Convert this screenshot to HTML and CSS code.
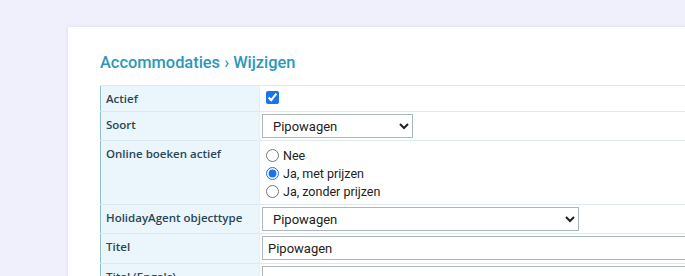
FILE: index.html
```
<!DOCTYPE html>
<html lang="nl">
<head>
<meta charset="utf-8">
<title>Accommodaties › Wijzigen</title>
<link rel="stylesheet" href="styles.css">
</head>
<body>
<div class="page">
  <div class="card">
    <h1 class="title">Accommodaties › Wijzigen</h1>
    <table class="form">
      <colgroup>
        <col class="col-lbl">
        <col class="col-val">
      </colgroup>
      <tr>
        <td class="lbl">Actief</td>
        <td class="val"><input type="checkbox" class="chk" checked></td>
      </tr>
      <tr>
        <td class="lbl">Soort</td>
        <td class="val">
          <select class="sel sel-sm"><option>Pipowagen</option></select>
        </td>
      </tr>
      <tr>
        <td class="lbl">Online boeken actief</td>
        <td class="val">
          <div class="radios">
            <label class="radio"><input type="radio" name="ob">Nee</label>
            <label class="radio"><input type="radio" name="ob" checked>Ja, met prijzen</label>
            <label class="radio"><input type="radio" name="ob">Ja, zonder prijzen</label>
          </div>
        </td>
      </tr>
      <tr>
        <td class="lbl">HolidayAgent objecttype</td>
        <td class="val">
          <select class="sel sel-lg"><option>Pipowagen</option></select>
        </td>
      </tr>
      <tr>
        <td class="lbl">Titel</td>
        <td class="val"><input type="text" class="txt" value="Pipowagen"></td>
      </tr>
      <tr>
        <td class="lbl">Titel (Engels)</td>
        <td class="val"><input type="text" class="txt" value=""></td>
      </tr>
    </table>
  </div>
</div>
</body>
</html>
```
FILE: styles.css
```
html, body {
  margin: 0;
  padding: 0;
  overflow: hidden;
}
body {
  background: #eff0fb;
  font-family: Roboto, "Liberation Sans", Arial, sans-serif;
}
.page {
  height: 276px;
  overflow: hidden;
  padding: 27px 0 0 68px;
  box-sizing: border-box;
}
.card {
  width: 700px;
  height: 400px;
  background: #ffffff;
  box-shadow: 0 0 3px rgba(120, 120, 170, 0.18);
  padding: 1px 0 0 32px;
  box-sizing: border-box;
}
.title {
  margin: 24px 0 0 0;
  font-family: Roboto, "Liberation Sans", sans-serif;
  font-weight: 500;
  font-size: 16.4px;
  line-height: 22px;
  color: #2a99b8;
  height: 33px;
}
.form {
  border-collapse: collapse;
  border: 1px solid #8fc0c9;
  width: 640px;
  table-layout: fixed;
}
.col-lbl { width: 159px; }
.col-val { width: 481px; }
.form td {
  border-top: 1px solid #dce9ef;
  vertical-align: top;
  padding: 0;
}
.lbl {
  background: #eaf5fc;
  padding: 5px 4px 5px 5px !important;
  font-family: "Open Sans", "Noto Sans", sans-serif;
  font-weight: 600;
  font-size: 11.5px;
  line-height: 15px;
  color: #2b4756;
  white-space: nowrap;
  border-right: 1px solid #e4eff5;
}
.val {
  padding: 2px 2px !important;
  background: #ffffff;
}
.chk {
  margin: 3px 3px 3px 4px;
  width: 13px;
  height: 13px;
  accent-color: #1a73e8;
}
.sel {
  height: 24px;
  border: 1px solid #aab8bd;
  border-radius: 0;
  background: #fff;
  font-family: Roboto, "Liberation Sans", sans-serif;
  font-size: 13px;
  color: #222;
  padding: 0 0 0 6px;
  margin: 0;
  display: block;
}
.sel-sm { width: 151px; }
.sel-lg { width: 317px; }
.radios {
  padding: 3px 0 2px 0;
}
.radio {
  display: flex;
  align-items: center;
  height: 18px;
  font-family: Roboto, "Liberation Sans", sans-serif;
  font-size: 12.5px;
  color: #222;
}
.radio input {
  margin: 0 4px 0 4px;
  width: 13px;
  height: 13px;
  accent-color: #1a73e8;
}
.txt {
  display: block;
  box-sizing: border-box;
  width: 500px;
  height: 24px;
  border: 1px solid #aab8bd;
  border-radius: 0;
  padding: 0 0 0 5px;
  margin: 0 0 1px 0;
  font-family: Roboto, "Liberation Sans", sans-serif;
  font-size: 13px;
  color: #222;
}
```
